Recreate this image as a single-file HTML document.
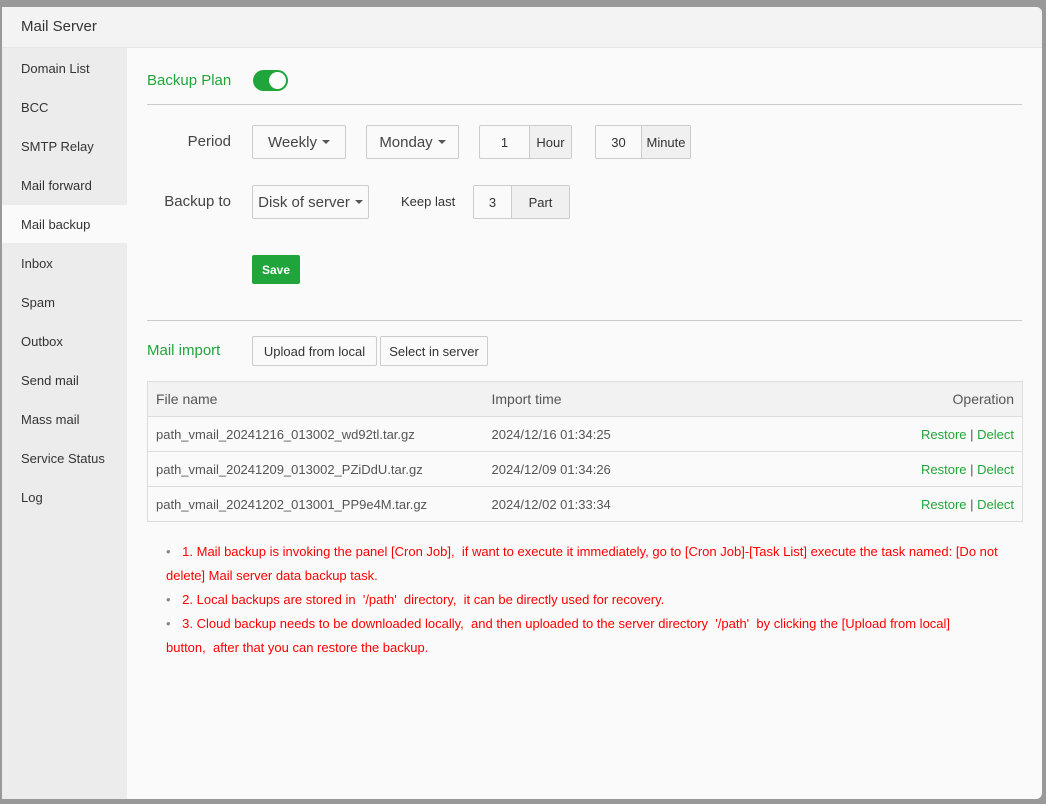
<!DOCTYPE html>
<html><head><meta charset="utf-8"><style>
*{margin:0;padding:0;box-sizing:border-box}
body{width:1046px;height:804px;background:#999;font-family:"Liberation Sans",sans-serif;position:relative;overflow:hidden;color:#333}
.a{position:absolute}
#modal{left:2px;top:7px;width:1040px;height:792px;background:#fafafa;border-radius:0 6px 6px 0;overflow:hidden}
#hdr{left:0;top:0;width:1040px;height:41px;background:#f3f3f3;border-bottom:1px solid #e6e6e6}
#side{left:0;top:41px;width:125px;height:760px;background:#ececec}
.it{position:absolute;left:19px;font-size:13px;color:#333;line-height:16px}
.box{position:absolute;border:1px solid #ccc;border-radius:2px;background:#fafafa;font-size:15px;color:#444;display:flex;align-items:center;justify-content:center}
.car{display:inline-block;width:0;height:0;border-left:4px solid transparent;border-right:4px solid transparent;border-top:4px solid #555;margin-left:5px;vertical-align:middle}
.inp{position:absolute;border:1px solid #ccc;border-radius:2px;display:flex;font-size:13px;color:#333}
.inp span{display:flex;align-items:center;justify-content:center}
.inp .ad{background:#f0f0f0;border-left:1px solid #ccc}
.btn{position:absolute;border:1px solid #ccc;border-radius:2px;background:#fafafa;font-size:13px;color:#333;display:flex;align-items:center;justify-content:center}
table{position:absolute;left:147px;top:381px;width:876px;border-collapse:collapse;font-size:13px;color:#555;border:1px solid #ddd}
td{border-top:1px solid #ddd;border-bottom:1px solid #ddd;padding:0 8px;height:35px}
tr:first-child td{background:#f2f2f2;font-size:14px}
.g{color:#20a53a}
.n{position:absolute;left:166px;width:845px;font-size:13px;color:#f00;line-height:24px}
.b{color:#888;margin-right:8px}
</style></head><body>
<div id="modal" class="a">
 <div id="hdr" class="a"><div class="a" style="left:19px;top:11px;font-size:15px;color:#333">Mail Server</div></div>
 <div id="side" class="a">
  <div class="a" style="left:0;top:157px;width:125px;height:38px;background:#fafafa"></div>
  <div class="it" style="top:13px">Domain List</div>
  <div class="it" style="top:52px">BCC</div>
  <div class="it" style="top:91px">SMTP Relay</div>
  <div class="it" style="top:130px">Mail forward</div>
  <div class="it" style="top:169px">Mail backup</div>
  <div class="it" style="top:208px">Inbox</div>
  <div class="it" style="top:247px">Spam</div>
  <div class="it" style="top:286px">Outbox</div>
  <div class="it" style="top:325px">Send mail</div>
  <div class="it" style="top:364px">Mass mail</div>
  <div class="it" style="top:403px">Service Status</div>
  <div class="it" style="top:442px">Log</div>
 </div>
</div>
<div class="a g" style="left:147px;top:72px;font-size:15px">Backup Plan</div>
<div class="a" style="left:253px;top:70px;width:35px;height:21px;border-radius:11px;background:#20a53a"><div class="a" style="left:16px;top:2px;width:17px;height:17px;border-radius:50%;background:#fff"></div></div>
<div class="a" style="left:147px;top:104px;width:875px;height:1px;background:#ccc"></div>
<div class="a" style="left:150px;top:133px;width:81px;text-align:right;font-size:15px;color:#444">Period</div>
<div class="box" style="left:252px;top:125px;width:94px;height:34px">Weekly<i class="car"></i></div>
<div class="box" style="left:366px;top:125px;width:93px;height:34px">Monday<i class="car"></i></div>
<div class="inp" style="left:479px;top:125px;width:93px;height:34px"><span style="width:49px">1</span><span class="ad" style="flex:1">Hour</span></div>
<div class="inp" style="left:595px;top:125px;width:96px;height:34px"><span style="width:45px">30</span><span class="ad" style="flex:1">Minute</span></div>
<div class="a" style="left:150px;top:193px;width:81px;text-align:right;font-size:15px;color:#444">Backup to</div>
<div class="box" style="left:252px;top:185px;width:117px;height:34px">Disk of server<i class="car"></i></div>
<div class="a" style="left:401px;top:194px;font-size:13px;color:#333">Keep last</div>
<div class="inp" style="left:473px;top:185px;width:97px;height:34px"><span style="width:37px">3</span><span class="ad" style="flex:1">Part</span></div>
<div class="a" style="left:252px;top:255px;width:48px;height:29px;background:#20a53a;border-radius:2px;color:#fff;font-size:12px;font-weight:bold;display:flex;align-items:center;justify-content:center">Save</div>
<div class="a" style="left:147px;top:320px;width:875px;height:1px;background:#ccc"></div>
<div class="a g" style="left:147px;top:342px;font-size:15px">Mail import</div>
<div class="btn" style="left:252px;top:336px;width:125px;height:30px">Upload from local</div>
<div class="btn" style="left:380px;top:336px;width:108px;height:30px">Select in server</div>
<table>
<tr><td style="width:336px">File name</td><td>Import time</td><td style="text-align:right">Operation</td></tr>
<tr><td>path_vmail_20241216_013002_wd92tl.tar.gz</td><td>2024/12/16 01:34:25</td><td style="text-align:right"><span class="g">Restore</span> | <span class="g">Delect</span></td></tr>
<tr><td>path_vmail_20241209_013002_PZiDdU.tar.gz</td><td>2024/12/09 01:34:26</td><td style="text-align:right"><span class="g">Restore</span> | <span class="g">Delect</span></td></tr>
<tr><td>path_vmail_20241202_013001_PP9e4M.tar.gz</td><td>2024/12/02 01:33:34</td><td style="text-align:right"><span class="g">Restore</span> | <span class="g">Delect</span></td></tr>
</table>
<div class="n" style="top:540px"><span class="b">•</span>&nbsp;1. Mail backup is invoking the panel [Cron Job],&nbsp; if want to execute it immediately, go to [Cron Job]-[Task List] execute the task named: [Do not delete] Mail server data backup task.</div>
<div class="n" style="top:588px"><span class="b">•</span>&nbsp;2. Local backups are stored in&nbsp; '/path'&nbsp; directory,&nbsp; it can be directly used for recovery.</div>
<div class="n" style="top:612px;width:800px"><span class="b">•</span>&nbsp;3. Cloud backup needs to be downloaded locally,&nbsp; and then uploaded to the server directory&nbsp; '/path'&nbsp; by clicking the [Upload from local] button,&nbsp; after that you can restore the backup.</div>
</body></html>
